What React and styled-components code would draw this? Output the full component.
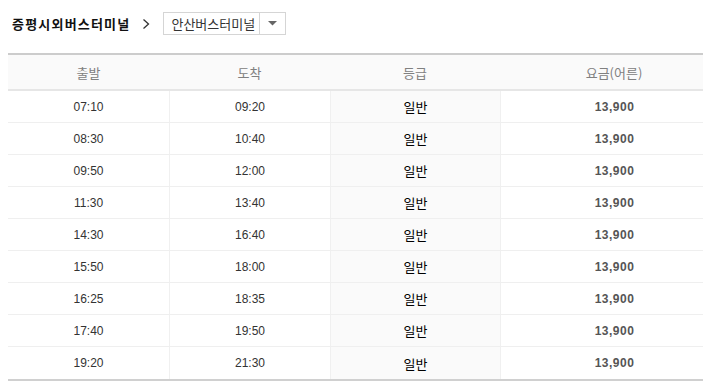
import React from "react";
import styled, { createGlobalStyle } from "styled-components";

const GlobalStyle = createGlobalStyle`
  *, *::before, *::after {
    box-sizing: border-box;
  }
  html, body {
    overflow: hidden;
  }
  body {
    margin: 8px 0 0 8px;
    background: #fff;
    font-family: "Noto Sans CJK KR", "Liberation Sans", sans-serif;
  }
`;

const rows = [
  ["07:10", "09:20"],
  ["08:30", "10:40"],
  ["09:50", "12:00"],
  ["11:30", "13:40"],
  ["14:30", "16:40"],
  ["15:50", "18:00"],
  ["16:25", "18:35"],
  ["17:40", "19:50"],
  ["19:20", "21:30"],
];

const Route = styled.div`
  display: flex;
  align-items: center;
  height: 23px;
  margin-top: 4px;
  padding-left: 4px;
`;

const Origin = styled.span`
  font-size: 13px;
  font-weight: bold;
  color: #111;
  letter-spacing: 1.2px;
`;

const Arrow = styled.svg`
  margin: 0 13px 0 12px;
  flex: none;
`;

const Select = styled.div`
  display: flex;
  height: 23px;
  border: 1px solid #d5d5d5;
  background: #fff;
`;

const SelectValue = styled.span`
  display: flex;
  align-items: center;
  width: 96px;
  padding-left: 7px;
  font-size: 13px;
  color: #333;
  border-right: 1px solid #d5d5d5;
  letter-spacing: 0px;
`;

const SelectButton = styled.span`
  width: 25px;
  display: flex;
  align-items: center;
  justify-content: center;
`;

const Table = styled.div`
  margin-top: 18px;
  width: 720px;
  border-top: 2px solid #cccccc;
  border-bottom: 2px solid #d0d0d0;
`;

const Row = styled.div`
  display: grid;
  grid-template-columns: 161px 161px 170px 228px;
  height: ${(p) => (p.$head ? "36px" : "32px")};
  background: ${(p) => (p.$head ? "#fafafa" : "#fff")};
  border-bottom: ${(p) => (p.$head ? "2px solid #e6e6e6" : "1px solid #efefef")};
  &:last-child {
    border-bottom: none;
  }
`;

const Cell = styled.div`
  display: flex;
  align-items: center;
  justify-content: center;
  font-size: ${(p) => (p.$head ? "13px" : "12px")};
  color: ${(p) => (p.$head ? "#808080" : "#333")};
  font-family: ${(p) =>
    p.$head ? `"Noto Sans CJK KR", sans-serif` : `"Liberation Sans", "DejaVu Sans", sans-serif`};
  border-left: ${(p) => (p.$head || p.$first ? "none" : "1px solid #f0f0f0")};
  background: ${(p) => (p.$shade ? "#fafafa" : "transparent")};
`;

const Grade = styled(Cell)`
  font-family: "Noto Sans CJK KR", sans-serif;
  font-size: 13px;
  color: #000;
`;

const Fare = styled(Cell)`
  font-weight: bold;
  color: #555;
  font-size: 12px;
  letter-spacing: 0.5px;
`;

export default function App() {
  return (
    <>
      <GlobalStyle />
      <Route>
        <Origin>증평시외버스터미널</Origin>
        <Arrow width="8" height="12" viewBox="0 0 8 12">
          <polyline points="1.5,1.5 6.5,6 1.5,10.5" fill="none" stroke="#333" strokeWidth="1.3" />
        </Arrow>
        <Select>
          <SelectValue>안산버스터미널</SelectValue>
          <SelectButton>
            <svg width="9" height="5" viewBox="0 0 9 5">
              <polygon points="0,0 9,0 4.5,4.5" fill="#666" />
            </svg>
          </SelectButton>
        </Select>
      </Route>
      <Table>
        <Row $head>
          <Cell $head>출발</Cell>
          <Cell $head>도착</Cell>
          <Cell $head>등급</Cell>
          <Cell $head>요금(어른)</Cell>
        </Row>
        {rows.map(([dep, arr]) => (
          <Row key={dep}>
            <Cell $first>{dep}</Cell>
            <Cell>{arr}</Cell>
            <Grade $shade>일반</Grade>
            <Fare>13,900</Fare>
          </Row>
        ))}
      </Table>
    </>
  );
}
